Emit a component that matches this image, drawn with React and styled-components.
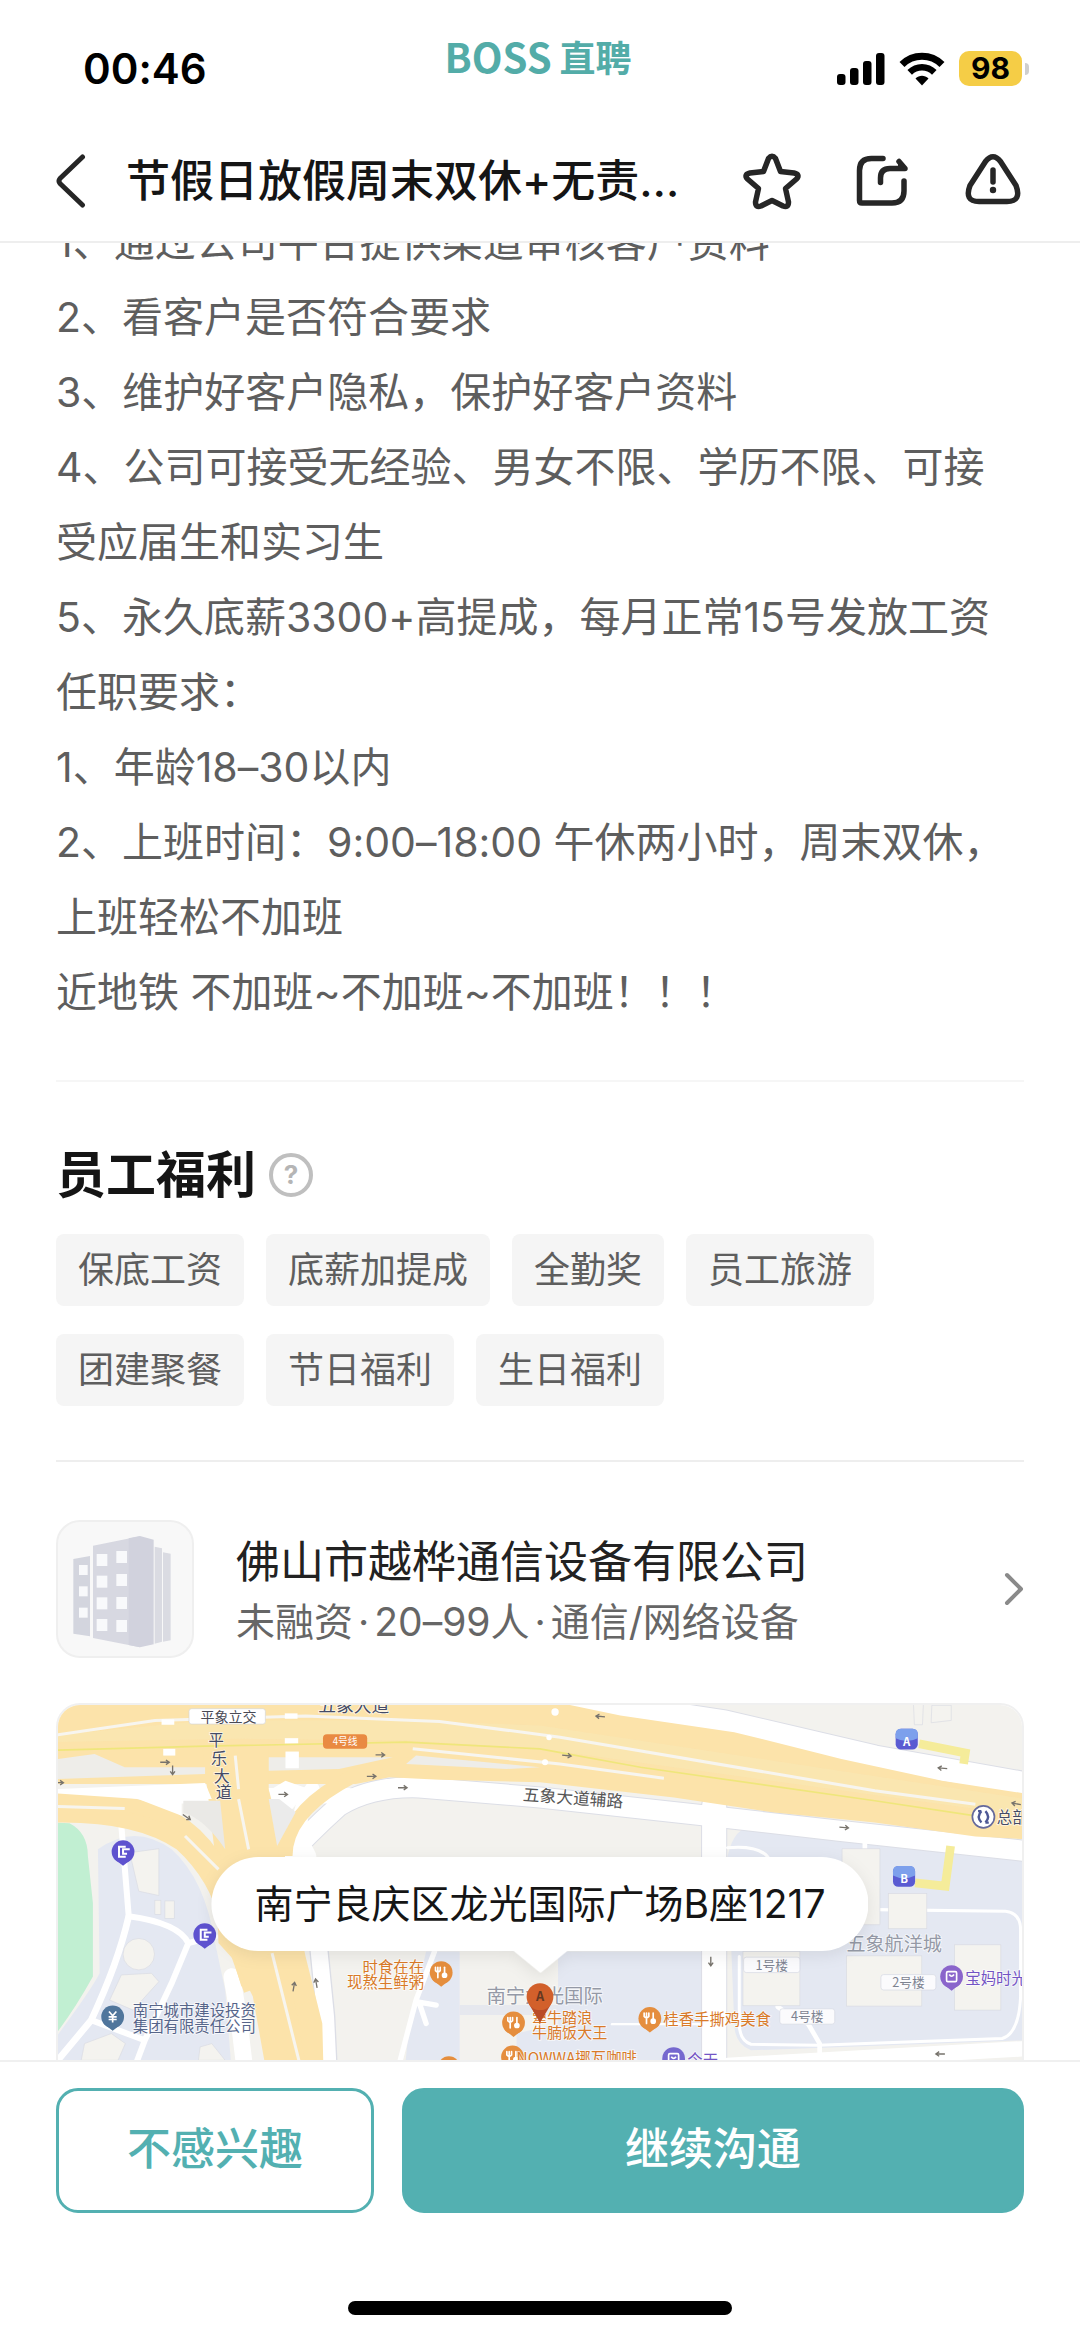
import React from "react";
import styled, { createGlobalStyle } from "styled-components";

const Global = createGlobalStyle`
  * { box-sizing: border-box; }
  html, body, #root { margin: 0; height: 100%; }
  body {
    background: #fff;
    color: #222;
    font-family: "Inter", "Noto Sans CJK SC", sans-serif;
    font-feature-settings: "calt" 0;
  }
  p, h1, h2, h3, ul { margin: 0; padding: 0; }
  button { font: inherit; margin: 0; padding: 0; cursor: pointer; }
`;

const Screen = styled.div`
  display: flex;
  flex-direction: column;
  height: 100vh;
  overflow: hidden;
`;

const Header = styled.header`
  flex: none;
  background: #fff;
  border-bottom: 2px solid #eeeeee;
  position: relative;
  z-index: 1;
`;

const StatusBar = styled.div`
  display: grid;
  grid-template-columns: 1fr auto 1fr;
  align-items: center;
  height: 121px;
  padding: 16px 51px 0 83px;
`;

const Clock = styled.span`
  font-size: 42px;
  font-weight: 600;
  line-height: 50px;
  color: #000;
`;

const Brand = styled.div`
  display: flex;
  align-items: center;
  gap: 8px;
  height: 50px;
  margin-bottom: 26px;
  padding-right: 36px;
  color: #53aca8;
  font-family: "Noto Sans CJK SC", sans-serif;
  font-weight: 700;
  line-height: 50px;
`;
const BrandLatin = styled.span`
  font-size: 40px;
`;
const BrandHan = styled.span`
  font-size: 36px;
`;

const Indicators = styled.div`
  display: flex;
  align-items: center;
  justify-content: flex-end;
  gap: 14px;
`;

const Battery = styled.div`
  display: flex;
  align-items: center;
  gap: 3px;
`;
const BatteryBody = styled.span`
  width: 63px;
  height: 35px;
  border-radius: 10px;
  background: #f5cd46;
  color: #000;
  font-size: 30px;
  font-weight: 700;
  line-height: 35px;
  text-align: center;
`;
const BatteryNub = styled.span`
  width: 4px;
  height: 12px;
  border-radius: 0 4px 4px 0;
  background: #cfcfcf;
`;

const NavBar = styled.nav`
  display: flex;
  align-items: center;
  height: 120px;
  padding: 0 56px;
`;

const IconButton = styled.button`
  display: flex;
  align-items: center;
  justify-content: ${(p) => p.$align || "center"};
  width: 60px;
  height: 60px;
  border: 0;
  background: none;
  color: #262626;
`;

const NavTitle = styled.h1`
  flex: 1;
  min-width: 0;
  margin-left: 10px;
  font-size: 44px;
  font-weight: 500;
  line-height: 60px;
  color: #151515;
  white-space: nowrap;
`;

const NavActions = styled.div`
  display: flex;
  gap: 51px;
`;

const Content = styled.main`
  flex: 1;
  min-height: 0;
  overflow-x: hidden;
  overflow-y: auto;
  scrollbar-width: none;
  padding: 0 56px;
`;

const Description = styled.section`
  margin-top: -38px;
  padding-bottom: 50px;
  font-size: 41px;
  line-height: 75px;
  color: #5e5e5e;
  white-space: nowrap;
`;

const Section = styled.section`
  border-top: 2px solid ${(p) => p.$line || "#eeeeee"};
  padding: 58px 0 ${(p) => p.$bottom || 0}px;
`;

const SectionHead = styled.div`
  display: flex;
  align-items: center;
  gap: 13px;
  margin-bottom: 24px;
`;
const SectionTitle = styled.h2`
  font-size: 50px;
  font-weight: 700;
  line-height: 70px;
  color: #151515;
`;
const HelpButton = styled.button`
  width: 44px;
  height: 44px;
  border: 4px solid #bfbfbf;
  border-radius: 50%;
  background: none;
  color: #b5b5b5;
  font-size: 26px;
  font-weight: 700;
  line-height: 36px;
`;

const Tags = styled.ul`
  display: flex;
  flex-wrap: wrap;
  gap: 28px 22px;
  list-style: none;
`;
const Tag = styled.li`
  padding: 0 22px;
  border-radius: 8px;
  background: #f5f5f5;
  color: #5e5e5e;
  font-size: 36px;
  line-height: 72px;
`;

const Company = styled.a`
  display: flex;
  align-items: center;
  margin-bottom: 45px;
  color: inherit;
  text-decoration: none;
`;
const CompanyLogo = styled.span`
  flex: none;
  width: 138px;
  height: 138px;
  border: 2px solid #efefef;
  border-radius: 24px;
  background: #f8f8f8;
  overflow: hidden;
`;
const CompanyText = styled.span`
  display: flex;
  flex-direction: column;
  flex: 1;
  margin-left: 42px;
  padding-top: 6px;
`;
const CompanyName = styled.span`
  font-size: 44px;
  line-height: 60px;
  color: #222;
`;
const CompanyMeta = styled.span`
  font-size: 39px;
  line-height: 60px;
  color: #666;
`;
const Dot = styled.span`
  margin: 0 5px;
`;

const MapCard = styled.div`
  position: relative;
  height: 430px;
  border: 2px solid #f0f0f0;
  border-radius: 24px;
  overflow: hidden;
`;
const MapSvg = styled.svg`
  display: block;
  width: 100%;
  height: 100%;
  font-family: "Noto Sans CJK SC", sans-serif;
`;
const Bubble = styled.div`
  position: absolute;
  top: 152px;
  left: 50%;
  transform: translateX(-50%);
  padding: 0 43px;
  border-radius: 47px;
  background: #fff;
  color: #151515;
  font-size: 39px;
  line-height: 94px;
  white-space: nowrap;
  filter: drop-shadow(0 4px 8px rgba(0, 0, 0, 0.08));
  &::after {
    content: "";
    position: absolute;
    top: 93px;
    left: 50%;
    margin-left: -28px;
    border: 28px solid transparent;
    border-top: 23px solid #fff;
    border-bottom: 0;
  }
`;

const Footer = styled.footer`
  flex: none;
  background: #fff;
  border-top: 2px solid #f0f0f0;
`;
const Actions = styled.div`
  display: grid;
  grid-template-columns: 318fr 622fr;
  gap: 28px;
  padding: 26px 56px 88px;
`;
const ActionButton = styled.button`
  height: 125px;
  padding-bottom: 4px;
  border: 3px solid #53b0b1;
  border-radius: 22px;
  background: ${(p) => (p.$primary ? "#53b0b1" : "#fff")};
  color: ${(p) => (p.$primary ? "#fff" : "#53b0b1")};
  font-size: 44px;
  font-weight: 500;
  line-height: 60px;
`;
const HomeBar = styled.div`
  width: 384px;
  height: 14px;
  margin: 0 auto 22px;
  border-radius: 7px;
  background: #000;
`;

const lines = [
  "1、通过公司平台提供渠道审核客户资料",
  "2、看客户是否符合要求",
  "3、维护好客户隐私，保护好客户资料",
  ["4、公司可接受无经验、男女不限、学历不限、可接", "受应届生和实习生"],
  "5、永久底薪3300+高提成，每月正常15号发放工资",
  "任职要求：",
  "1、年龄18–30以内",
  ["2、上班时间：9:00–18:00 午休两小时，周末双休，", "上班轻松不加班"],
  "近地铁 不加班~不加班~不加班！！！",
];

const tags = ["保底工资", "底薪加提成", "全勤奖", "员工旅游", "团建聚餐", "节日福利", "生日福利"];

function Signal() {
  return (
    <svg width="48" height="34" viewBox="0 0 48 34" fill="#000" aria-hidden="true">
      <rect x="0" y="22" width="8.5" height="11" rx="3" />
      <rect x="13" y="16" width="8.5" height="17" rx="3" />
      <rect x="26" y="9" width="8.5" height="24" rx="3" />
      <rect x="39" y="1" width="8.5" height="32" rx="3" />
    </svg>
  );
}

function Wifi() {
  return (
    <svg width="46" height="34" viewBox="0 0 46 34" fill="none" aria-hidden="true">
      <path d="M3 12.5C14 1.5 32 1.5 43 12.5" stroke="#000" strokeWidth="7" />
      <path d="M10.7 20.3c7-6.8 17.600-6.800 24.600 0" stroke="#000" strokeWidth="6.500" />
      <path d="M16.500 26.500c3.800-3.700 9.200-3.700 13 0L23 33.500z" fill="#000" />
    </svg>
  );
}

function BackIcon() {
  return (
    <svg width="30" height="54" viewBox="0 0 30 54" fill="none" aria-hidden="true">
      <path d="M26.500 3L4 24.500q-2 2.500 0 5L26.500 51" stroke="currentColor" strokeWidth="5" strokeLinecap="round" strokeLinejoin="round" />
    </svg>
  );
}

function StarIcon() {
  return (
    <svg width="60" height="60" viewBox="0 0 60 60" fill="none" aria-hidden="true">
      <path
        d="M26.500 7.500q3.500-4.500 7 0L38.500 20.500 52 22q6.500 1.500 2.500 6L43.500 37.500 46.500 51q0 6-5.500 4L30 49.500 19 55q-5.500 2-5.500-4L16.500 37.500 5.500 28q-4-4.500 2.500-6L21.500 20.500z"
        stroke="currentColor" strokeWidth="5.500" strokeLinejoin="round"
      />
    </svg>
  );
}

function ShareIcon() {
  return (
    <svg width="60" height="60" viewBox="0 0 60 60" fill="none" stroke="currentColor" strokeWidth="5.500" strokeLinecap="round" strokeLinejoin="round" aria-hidden="true">
      <path d="M30 7.500H18.500Q6.500 7.500 6.500 19.500V49.500Q6.500 52 9 52H39Q51 52 51 40V30" />
      <path d="M27.500 31.500V27Q27.500 17.500 37 17.500H52L46 10.500" />
      <path d="M46 11V17.500H53z" fill="currentColor" strokeWidth="2" />
    </svg>
  );
}

function WarnIcon() {
  return (
    <svg width="60" height="60" viewBox="0 0 60 60" fill="none" stroke="currentColor" strokeWidth="5.500" strokeLinecap="round" aria-hidden="true">
      <path d="M21.500 10.500Q29 1 36.500 10.500L52 34.500Q58 50.500 43 50.500H15Q0 50.500 6 34.500z" strokeLinejoin="round" />
      <path d="M29 19V31" />
      <circle cx="29" cy="39" r="3.200" fill="currentColor" stroke="none" />
    </svg>
  );
}

function Building() {
  const windows = [];
  [[170, 165, 32], [229, 156, 32]].forEach(([x, y, s]) => {
    for (let i = 0; i < 4; i++) windows.push([x, y + i * (x > 200 ? 69 : 65), s]);
  });
  for (let i = 0; i < 3; i++) windows.push([117, 198 + i * 64, 26]);
  return (
    <svg width="100%" height="100%" viewBox="54 69 402 402" aria-hidden="true">
      <path d="M369 160L392 164V424L369 428z" fill="#dadbe2" />
      <path d="M344 143L366 148V428L344 434z" fill="#dadbe2" />
      <path d="M100 180L150 171V412L100 404z" fill="#d3d5de" />
      <path d="M159 140L300 112V445L159 417z" fill="#d7d8e1" />
      <path d="M266 118L300 111 341 122V436L300 445 266 438z" fill="#d1d2dd" />
      {windows.map(([x, y, s]) => (
        <rect key={`${x}-${y}`} x={x} y={y} width={s} height={s + 4} fill="#f8f9fb" />
      ))}
    </svg>
  );
}

function Pin({ x, y, color, kind }) {
  return (
    <g transform={`translate(${x} ${y})`}>
      <path d="M-28 20L0 42 28 20z" fill={color} />
      <circle r="34" fill={color} />
      {kind === "food" && (
        <g stroke="#fff" strokeWidth="5" strokeLinecap="round" fill="none">
          <path d="M-17-16V-6Q-10 2-3-6V-16M-10-16V15" />
          <path d="M10 2V-16" />
          <circle cx="10" cy="8" r="6" fill="#fff" />
        </g>
      )}
      {kind === "exit" && <path d="M8-15H-12V15H8M20-7H0V6H12" stroke="#fff" strokeWidth="6" fill="none" />}
      {kind === "yuan" && <path d="M-11-16L0-3 11-16M0-3V17M-12 0H12M-12 8H12" stroke="#fff" strokeWidth="5" fill="none" />}
      {kind === "bag" && (
        <g fill="none" stroke="#fff" strokeWidth="5">
          <rect x="-15" y="-15" width="30" height="30" rx="4" />
          <path d="M-7-6Q0 4 7-6" />
        </g>
      )}
    </g>
  );
}

function Arrow({ x, y, r = 0 }) {
  return (
    <path
      d="M-14 0H12M3-7L13 0 3 7"
      transform={`translate(${x} ${y}) rotate(${r})`}
      stroke="#77736c" strokeWidth="4" fill="none"
    />
  );
}

function Label({ x, y, size = 44, color = "#444b66", children, ...rest }) {
  return (
    <text
      x={x} y={y} fontSize={size} fill={color}
      stroke="#fff" strokeOpacity="0.7" strokeWidth="5" paintOrder="stroke" {...rest}
    >
      {children}
    </text>
  );
}

function Plate({ x, y, w, children }) {
  return (
    <g>
      <rect x={x} y={y} width={w} height="46" rx="8" fill="#fbfbfd" stroke="#d5d8e2" strokeWidth="2" />
      <text x={x + w / 2} y={y + 37} fontSize="38" fill="#7d8391" textAnchor="middle">{children}</text>
    </g>
  );
}

function MapArt() {
  const orange = "#e58e3e";
  const orangeText = "#d97a28";
  return (
    <MapSvg viewBox="54 49 2892 1272" preserveAspectRatio="xMidYMin slice" role="img" aria-label="地图">
      <rect x="0" y="0" width="3000" height="1400" fill="#f3f2ee" />
      <path d="M48 400L95 402Q150 430 150 500L165 640V860Q110 960 48 1040z" fill="#c1efd2" />
      <path d="M180 480Q290 400 400 480 500 570 530 760L560 900 600 1400H48V1050Q160 900 185 850z" fill="#e4e8f2" />
      <path d="M1160 785H1260V1400H1070L1110 1000z" fill="#e4e8f2" />
      <path d="M1554 785H1990V1400H1430V1030L1554 1000z" fill="#e4e8f2" />
      <path d="M1260 945H1554V975H1260z" fill="#e6e8ee" />
      <path d="M2060 500Q2080 410 2140 410L2400 450 2952 515V1050L2130 1080Q2080 1060 2080 1000z" fill="#e4e8f2" />

      <g fill="none" stroke="#dcdee6" strokeLinecap="round">
        <path d="M2020 350V1400" strokeWidth="78" />
        <path d="M730 520Q800 440 900 350 1000 290 1140 295L1500 325 2000 380 2400 425 2952 485" strokeWidth="66" />
        <path d="M1560 25L2050 100 2500 205 2980 290" strokeWidth="76" />
        <path d="M840 780L860 980 880 1400" strokeWidth="58" />
      </g>
      <g fill="none" stroke="#fff" strokeLinecap="round">
        <path d="M2020 350V1400" strokeWidth="72" />
        <path d="M730 520Q800 440 900 350 1000 290 1140 295L1500 325 2000 380 2400 425 2952 485" strokeWidth="60" />
        <path d="M340 320H930" strokeWidth="46" />
        <path d="M1560 25L2050 100 2500 205 2980 290" strokeWidth="70" />
        <path d="M820 300Q770 360 790 460L810 500" strokeWidth="44" />
        <path d="M840 780L860 980 880 1400" strokeWidth="50" />
        <path d="M580 860L600 980 650 1400" strokeWidth="50" />
        <path d="M250 410L272 680Q420 700 450 760" strokeWidth="18" />
        <path d="M272 680Q240 820 160 990L60 1110" strokeWidth="20" />
        <path d="M160 990L320 1050 400 880 450 760 530 740M320 1050L290 1130" strokeWidth="18" />
        <path d="M1185 785L1130 930 1080 1120M1130 935L1190 945M1140 940L1160 1000" strokeWidth="16" />
        <path d="M1715 1002H1990" strokeWidth="7" />
        <path d="M2060 475Q2170 465 2190 520M2500 660L2890 665Q2935 670 2935 720V920Q2930 1030 2880 1045L2330 1065 2130 1062Q2095 1050 2095 1000V800" strokeWidth="9" />
        <path d="M2210 950L2250 980 2300 1000 2335 1060V1130M2470 455V490" strokeWidth="14" />
        <path d="M2060 1125L2952 1075" strokeWidth="46" />
      </g>

      <g fill="#fce3aa">
        <path d="M48 43H1560L1740 80 2080 130 2400 210 2700 275 2960 315V450L2800 442 2500 400 2200 370 1900 325 1500 280 1200 272 1050 265 950 285H48z" />
        <path d="M490 160H690V300L730 460 800 800 850 1000 860 1400H810L700 1110 640 870 540 760 530 500z" />
      </g>
      <g fill="none" stroke="#fce3aa">
        <path d="M48 345Q250 330 400 400 540 480 580 680L640 880" strokeWidth="66" />
        <path d="M48 375Q300 370 430 460 540 560 570 700L640 900" strokeWidth="50" />
        <path d="M740 500Q740 380 900 285 1010 220 1140 170" strokeWidth="42" />
        <path d="M600 700L700 900 790 1400" strokeWidth="120" />
      </g>
      <path d="M48 160L600 150 1100 155 1500 180 2952 380V330L1500 110 1100 95H500L48 140z" fill="#fae5b0" opacity="0.9" />
      <path d="M60 210L170 195 260 235 500 235V255L60 270z" fill="#eeede9" />
      <path d="M690 205H1060L900 240 690 245z" fill="#eeede9" />
      <path d="M48 300L500 282 520 330H430V380L300 330 48 312z" fill="#fff" />
      <path d="M435 335H545L560 480Q500 390 435 370z" fill="#eae9e6" />
      <path d="M690 330H740L770 370 715 470z" fill="#ebebeb" />
      <path d="M1130 200L1500 235 1400 240 1100 225z" fill="#eeede9" />
      <g fill="none" stroke="#f7f5ef" strokeWidth="9">
        <path d="M48 140L350 95 800 82 1200 98 1560 145 2500 305 2800 345" />
        <path d="M600 330L630 480M440 440L540 540M48 352L260 358M700 790L780 1110M590 200L600 300" />
        <path d="M1120 180L1560 225 1870 268" />
      </g>
      <g fill="#fff">
        <rect x="370" y="92" width="38" height="16" />
        <rect x="738" y="74" width="38" height="16" />
        <rect x="738" y="148" width="40" height="16" />
        <rect x="375" y="180" width="36" height="20" />
        <rect x="740" y="188" width="40" height="50" />
        <path d="M690 305L740 275 810 300 760 360z" />
        <circle cx="1527" cy="146" r="8" />
        <circle cx="1515" cy="220" r="9" />
        <circle cx="1545" cy="70" r="11" />
      </g>
      <path d="M48 184L500 172 1100 160 1500 180 1800 235 2500 335 2800 380" stroke="#efe67b" strokeWidth="5" fill="none" />
      <path d="M2632 165L2770 192 2765 225M2620 580L2710 590 2726 470" stroke="#f5ec9a" strokeWidth="26" fill="none" />

      <g fill="#f4f3ef" stroke="#d9dbe2" strokeWidth="2">
        <path d="M275 490L362 478V618L302 605z" />
        <rect x="350" y="632" width="18" height="42" />
        <rect x="380" y="634" width="28" height="52" />
        <circle cx="302" cy="793" r="47" />
        <path d="M250 855L340 850 362 875 285 960 215 930z" />
        <path d="M140 1060L220 1030 262 1060 240 1110H130z" />
        <path d="M485 1070L520 1060 560 1110H480z" />
        <path d="M2402 478H2515V705H2402z" />
        <rect x="2540" y="612" width="115" height="105" />
        <rect x="2415" y="798" width="225" height="150" />
        <rect x="2738" y="765" width="138" height="195" />
        <rect x="2106" y="785" width="170" height="162" />
        <path d="M2615 43H2645L2642 108H2618zM2670 50H2728V95L2668 102z" />
      </g>

      <g>
        <Arrow x={380} y={220} />
        <Arrow x={403} y={244} r={90} />
        <Arrow x={733} y={316} />
        <Arrow x={1023} y={198} />
        <Arrow x={997} y={262} />
        <Arrow x={1090} y={296} />
        <Arrow x={445} y={384} r={35} />
        <Arrow x={64} y={281} />
        <Arrow x={765} y={890} r={-80} />
        <Arrow x={832} y={880} r={-100} />
        <Arrow x={1680} y={83} r={185} />
        <Arrow x={1580} y={200} r={6} />
        <Arrow x={2702} y={238} r={185} />
        <Arrow x={2922} y={344} r={190} />
        <Arrow x={2408} y={415} r={5} />
        <Arrow x={2010} y={815} r={90} />
        <Arrow x={2695} y={1091} r={180} />
      </g>

      <rect x="452" y="60" width="228" height="46" rx="8" fill="#fff" stroke="#d5d5d5" strokeWidth="2" />
      <text x="486" y="99" fontSize="42" fill="#4a4a55">平象立交</text>
      <Label x={838} y={70} size={53}>五象大道</Label>
      <rect x="852" y="136" width="132" height="44" rx="12" fill="#e98a42" />
      <text x="918" y="169" fontSize="29" fill="#fff" textAnchor="middle">4号线</text>
      <Label x={510} y={172} size={46}>平</Label>
      <Label x={518} y={226} size={48}>乐</Label>
      <Label x={526} y={278} size={48}>大</Label>
      <Label x={532} y={328} size={48}>道</Label>
      <Label x={1448} y={334} size={50} color="#555" transform="rotate(4 1448 334)">五象大道辅路</Label>

      <Pin x={255} y={487} color="#5e52cf" kind="exit" />
      <Pin x={499} y={735} color="#5e52cf" kind="exit" />
      <Pin x={224} y={980} color="#50769c" kind="yuan" />
      <Label x={284} y={978} size={46} color="#56658a">南宁城市建设投资</Label>
      <Label x={284} y={1026} size={46} color="#56658a">集团有限责任公司</Label>
      <Label x={970} y={848} size={46} color={orangeText}>时食在在</Label>
      <Label x={924} y={894} size={46} color={orangeText}>现熬生鲜粥</Label>
      <Pin x={1205} y={848} color={orange} kind="food" />
      <Label x={1340} y={938} size={58} color="#9499a6">南宁龙光国际</Label>
      <Pin x={1421} y={998} color={orange} kind="food" />
      <Label x={1476} y={998} size={45} color={orangeText}>犟牛踏浪</Label>
      <Label x={1476} y={1044} size={45} color={orangeText}>牛腩饭大王</Label>
      <Pin x={1418} y={1100} color={orange} kind="food" />
      <Label x={1430} y={1122} size={46} color={orangeText}>NOWWA挪瓦咖啡</Label>
      <Pin x={1228} y={1132} color={orange} kind="food" />
      <Pin x={1828} y={985} color={orange} kind="food" />
      <Label x={1868} y={1006} size={46} color={orangeText}>桂香手撕鸡美食</Label>
      <Pin x={1899} y={1105} color="#7568cf" kind="bag" />
      <Label x={1940} y={1126} size={46} color="#7354c4">今天</Label>
      <path d="M1466 940L1500 998 1534 940z" fill="#b94c29" />
      <circle cx="1500" cy="920" r="40" fill="#d2602b" />
      <text x="1500" y="934" fontSize="38" fontWeight="700" fill="#643822" textAnchor="middle">A</text>

      <Label x={2415} y={784} size={57} color="#9499a6">五象航洋城</Label>
      <Plate x={2108} y={802} w={168}>1号楼</Plate>
      <Plate x={2518} y={854} w={164}>2号楼</Plate>
      <Plate x={2216} y={956} w={164}>4号楼</Plate>
      <Pin x={2729} y={860} color="#8a65cb" kind="bag" />
      <Label x={2770} y={882} size={46} color="#7354c4">宝妈时光</Label>

      <rect x="2562" y="120" width="66" height="62" rx="16" fill="#5a5bd2" />
      <path d="M2562 148Q2595 165 2628 148V136Q2628 120 2612 120H2578Q2562 120 2562 136z" fill="#7da0ec" />
      <text x="2595" y="170" fontSize="34" fontWeight="700" fill="#fff" textAnchor="middle">A</text>
      <rect x="2554" y="530" width="66" height="62" rx="16" fill="#5a5bd2" />
      <path d="M2554 558Q2587 575 2620 558V546Q2620 530 2604 530H2570Q2554 530 2554 546z" fill="#7da0ec" />
      <text x="2587" y="580" fontSize="34" fontWeight="700" fill="#fff" textAnchor="middle">B</text>
      <circle cx="2824" cy="383" r="33" fill="#fff" stroke="#666a9c" strokeWidth="5" />
      <path d="M2818 366Q2802 383 2818 400M2830 400Q2846 383 2830 366M2818 366H2808M2830 400H2840" stroke="#4d5795" strokeWidth="7" fill="none" />
      <Label x={2864} y={402} size={46}>总部</Label>
    </MapSvg>
  );
}

export default function App() {
  return (
    <Screen>
      <Global />
      <Header>
        <StatusBar>
          <Clock>00:46</Clock>
          <Brand>
            <BrandLatin>BOSS</BrandLatin>
            <BrandHan>直聘</BrandHan>
          </Brand>
          <Indicators>
            <Signal />
            <Wifi />
            <Battery>
              <BatteryBody>98</BatteryBody>
              <BatteryNub />
            </Battery>
          </Indicators>
        </StatusBar>
        <NavBar>
          <IconButton aria-label="返回" $align="flex-start">
            <BackIcon />
          </IconButton>
          <NavTitle>节假日放假周末双休+无责…</NavTitle>
          <NavActions>
            <IconButton aria-label="收藏"><StarIcon /></IconButton>
            <IconButton aria-label="分享"><ShareIcon /></IconButton>
            <IconButton aria-label="举报"><WarnIcon /></IconButton>
          </NavActions>
        </NavBar>
      </Header>

      <Content>
        <Description>
          {lines.map((line, i) => (
            <p key={i}>
              {Array.isArray(line) ? <>{line[0]}<br />{line[1]}</> : line}
            </p>
          ))}
        </Description>

        <Section $line="#f6f6f6" $bottom={54}>
          <SectionHead>
            <SectionTitle>员工福利</SectionTitle>
            <HelpButton aria-label="福利说明">?</HelpButton>
          </SectionHead>
          <Tags>
            {tags.map((t) => <Tag key={t}>{t}</Tag>)}
          </Tags>
        </Section>

        <Section>
          <Company href="#company">
            <CompanyLogo><Building /></CompanyLogo>
            <CompanyText>
              <CompanyName>佛山市越桦通信设备有限公司</CompanyName>
              <CompanyMeta>
                未融资<Dot>·</Dot>20–99人<Dot>·</Dot>通信/网络设备
              </CompanyMeta>
            </CompanyText>
            <svg width="20" height="34" viewBox="0 0 20 34" fill="none" aria-hidden="true">
              <path d="M3 3L17 17 3 31" stroke="#8a8a8a" strokeWidth="4" strokeLinecap="round" strokeLinejoin="round" />
            </svg>
          </Company>
          <MapCard>
            <MapArt />
            <Bubble>南宁良庆区龙光国际广场B座1217</Bubble>
          </MapCard>
        </Section>
      </Content>

      <Footer>
        <Actions>
          <ActionButton>不感兴趣</ActionButton>
          <ActionButton $primary>继续沟通</ActionButton>
        </Actions>
        <HomeBar />
      </Footer>
    </Screen>
  );
}
